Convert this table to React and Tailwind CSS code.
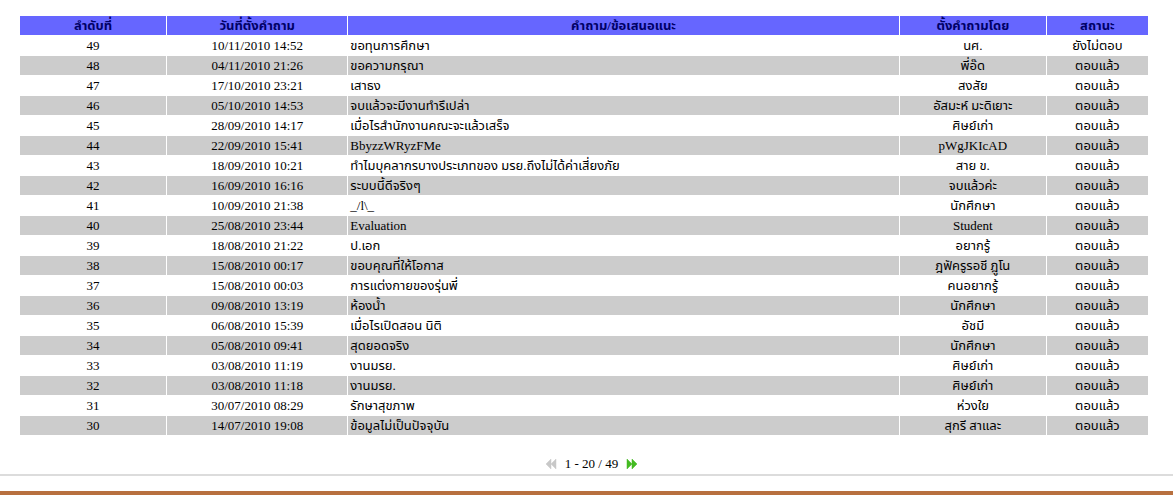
const rows = [
  ['49', '10/11/2010 14:52', 'ขอทุนการศึกษา', 'นศ.', 'ยังไม่ตอบ'],
  ['48', '04/11/2010 21:26', 'ขอความกรุณา', 'พี่อ๊ด', 'ตอบแล้ว'],
  ['47', '17/10/2010 23:21', 'เสาธง', 'สงสัย', 'ตอบแล้ว'],
  ['46', '05/10/2010 14:53', 'จบแล้วจะมีงานทำรึเปล่า', 'อัสมะห์ มะดิเยาะ', 'ตอบแล้ว'],
  ['45', '28/09/2010 14:17', 'เมื่อไรสำนักงานคณะจะแล้วเสร็จ', 'ศิษย์เก่า', 'ตอบแล้ว'],
  ['44', '22/09/2010 15:41', 'BbyzzWRyzFMe', 'pWgJKIcAD', 'ตอบแล้ว'],
  ['43', '18/09/2010 10:21', 'ทำไมบุคลากรบางประเภทของ มรย.ถึงไม่ได้ค่าเสี่ยงภัย', 'สาย ข.', 'ตอบแล้ว'],
  ['42', '16/09/2010 16:16', 'ระบบนี้ดีจริงๆ', 'จบแล้วค่ะ', 'ตอบแล้ว'],
  ['41', '10/09/2010 21:38', '_/l\\_', 'นักศึกษา', 'ตอบแล้ว'],
  ['40', '25/08/2010 23:44', 'Evaluation', 'Student', 'ตอบแล้ว'],
  ['39', '18/08/2010 21:22', 'ป.เอก', 'อยากรู้', 'ตอบแล้ว'],
  ['38', '15/08/2010 00:17', 'ขอบคุณที่ให้โอกาส', 'ฎฟัครูรอชี ฎูโน', 'ตอบแล้ว'],
  ['37', '15/08/2010 00:03', 'การแต่งกายของรุ่นพี่', 'คนอยากรู้', 'ตอบแล้ว'],
  ['36', '09/08/2010 13:19', 'ห้องน้ำ', 'นักศึกษา', 'ตอบแล้ว'],
  ['35', '06/08/2010 15:39', 'เมื่อไรเปิดสอน นิติ', 'อัชมี', 'ตอบแล้ว'],
  ['34', '05/08/2010 09:41', 'สุดยอดจริง', 'นักศึกษา', 'ตอบแล้ว'],
  ['33', '03/08/2010 11:19', 'งานมรย.', 'ศิษย์เก่า', 'ตอบแล้ว'],
  ['32', '03/08/2010 11:18', 'งานมรย.', 'ศิษย์เก่า', 'ตอบแล้ว'],
  ['31', '30/07/2010 08:29', 'รักษาสุขภาพ', 'ห่วงใย', 'ตอบแล้ว'],
  ['30', '14/07/2010 19:08', 'ข้อมูลไม่เป็นปัจจุบัน', 'สุกรี สาและ', 'ตอบแล้ว'],
]

const serif = { fontFamily: '"Liberation Serif", "Noto Sans Thai", Tahoma, serif' }

function Arrows({ dir, color }) {
  const pts = dir === 'left'
    ? ['6,1 1,6 6,11', '11,1 6,6 11,11']
    : ['1,1 6,6 1,11', '6,1 11,6 6,11']
  return (
    <svg width="12" height="12" viewBox="0 0 12 12">
      {pts.map((p) => (
        <polygon key={p} points={p} fill={color} stroke={color} strokeWidth="0.5" />
      ))}
    </svg>
  )
}

export default function App() {
  return (
    <div className="h-[495px] overflow-hidden bg-white flex flex-col text-[13px] text-black" style={serif}>
      <div className="pt-[15px] pl-[19px]">
        <table className="border-separate border-spacing-[1px] w-[1130px] table-fixed">
          <colgroup>
            <col className="w-[146px]" />
            <col className="w-[180px]" />
            <col className="w-[550px]" />
            <col className="w-[146px]" />
            <col className="w-[101px]" />
          </colgroup>
          <thead>
            <tr className="bg-[#6666ff] text-[#000066] h-[19px]">
              <th className="font-bold p-0 leading-[19px]">ลำดับที่</th>
              <th className="font-bold p-0 leading-[19px]">วันที่ตั้งคำถาม</th>
              <th className="font-bold p-0 leading-[19px]">คำถาม/ข้อเสนอแนะ</th>
              <th className="font-bold p-0 leading-[19px]">ตั้งคำถามโดย</th>
              <th className="font-bold p-0 leading-[19px]">สถานะ</th>
            </tr>
          </thead>
          <tbody>
            {rows.map((r, i) => (
              <tr key={r[0]} className={`h-[19px] ${i % 2 === 1 ? 'bg-[#cccccc]' : 'bg-white'}`}>
                <td className="text-center p-0 leading-[19px] font-normal">{r[0]}</td>
                <td className="text-center p-0 leading-[19px] font-normal">{r[1]}</td>
                <td className="text-left p-0 pl-[2px] leading-[19px] font-normal whitespace-nowrap overflow-hidden">{r[2]}</td>
                <td className="text-center p-0 leading-[19px] font-normal">{r[3]}</td>
                <td className="text-center p-0 leading-[19px] font-normal">{r[4]}</td>
              </tr>
            ))}
          </tbody>
        </table>
      </div>

      <div className="flex items-center justify-center gap-[8px] mt-[20px] h-[16px] pl-[10px]">
        <Arrows dir="left" color="#c8c8c8" />
        <span>1 - 20 / 49</span>
        <Arrows dir="right" color="#44bb22" />
      </div>

      <div className="mt-[2px] border-t-2 border-[#dcdcdc]" />
      <div className="flex-1 bg-white" />
      <div className="h-[4px] bg-[#b8703f]" />
    </div>
  )
}
